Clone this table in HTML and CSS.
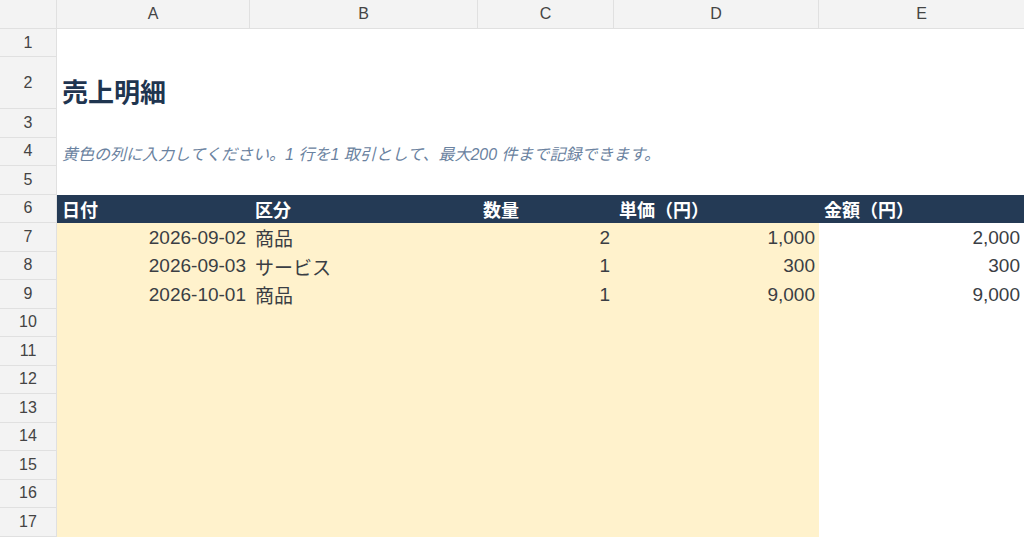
FILE: index.html
```html
<!DOCTYPE html>
<html lang="ja">
<head>
<meta charset="utf-8">
<title>売上明細</title>
<link rel="stylesheet" href="styles.css">
</head>
<body>
<div class="sheet">
  <div class="corner"></div>
  <div class="colhead">A</div>
  <div class="colhead">B</div>
  <div class="colhead">C</div>
  <div class="colhead">D</div>
  <div class="colhead last">E</div>

  <div class="rowhead r1">1</div>
  <div class="cell span r1"></div>

  <div class="rowhead r2">2</div>
  <div class="cell span title r2">売上明細</div>

  <div class="rowhead">3</div>
  <div class="cell span"></div>

  <div class="rowhead">4</div>
  <div class="cell span note">黄色の列に入力してください。1 行を1 取引として、最大200 件まで記録できます。</div>

  <div class="rowhead">5</div>
  <div class="cell span"></div>

  <div class="rowhead">6</div>
  <div class="cell hd">日付</div>
  <div class="cell hd">区分</div>
  <div class="cell hd">数量</div>
  <div class="cell hd">単価（円）</div>
  <div class="cell hd">金額（円）</div>

  <div class="rowhead">7</div>
  <div class="cell in num">2026-09-02</div>
  <div class="cell in">商品</div>
  <div class="cell in num">2</div>
  <div class="cell in num">1,000</div>
  <div class="cell num">2,000</div>

  <div class="rowhead">8</div>
  <div class="cell in num">2026-09-03</div>
  <div class="cell in">サービス</div>
  <div class="cell in num">1</div>
  <div class="cell in num">300</div>
  <div class="cell num">300</div>

  <div class="rowhead">9</div>
  <div class="cell in num">2026-10-01</div>
  <div class="cell in">商品</div>
  <div class="cell in num">1</div>
  <div class="cell in num">9,000</div>
  <div class="cell num">9,000</div>

  <div class="rowhead">10</div><div class="cell in span4"></div><div class="cell"></div>
  <div class="rowhead">11</div><div class="cell in span4"></div><div class="cell"></div>
  <div class="rowhead">12</div><div class="cell in span4"></div><div class="cell"></div>
  <div class="rowhead">13</div><div class="cell in span4"></div><div class="cell"></div>
  <div class="rowhead">14</div><div class="cell in span4"></div><div class="cell"></div>
  <div class="rowhead">15</div><div class="cell in span4"></div><div class="cell"></div>
  <div class="rowhead">16</div><div class="cell in span4"></div><div class="cell"></div>
  <div class="rowhead">17</div><div class="cell in span4"></div><div class="cell"></div>
</div>
</body>
</html>
```
FILE: styles.css
```css
html, body {
  margin: 0;
  padding: 0;
  background: #ffffff;
  overflow: hidden;
}

body {
  font-family: "Liberation Sans", Arial, "Noto Sans CJK JP", sans-serif;
  color: #3a3e44;
}

.sheet {
  display: grid;
  grid-template-columns: 57px 193px 228px 136px 205px 205px;
  grid-auto-rows: 28.5px;
  grid-template-rows: 29px 28px 52px;
  width: 1024px;
}

.corner,
.colhead {
  background: #f3f3f3;
  border-bottom: 1px solid #e0e0e0;
  border-right: 1px solid #e0e0e0;
  box-sizing: border-box;
}

.colhead {
  display: flex;
  align-items: center;
  justify-content: center;
  font-size: 16px;
  color: #444444;
}

.colhead.last {
  border-right: none;
}

.rowhead {
  background: #f3f3f3;
  border-bottom: 1px solid #e0e0e0;
  border-right: 1px solid #e0e0e0;
  box-sizing: border-box;
  display: flex;
  align-items: center;
  justify-content: center;
  font-size: 16px;
  color: #444444;
}

.cell {
  display: flex;
  align-items: center;
  padding: 1px 4px 0 5px;
  font-size: 19px;
  white-space: nowrap;
  min-width: 0;
  overflow: visible;
}

.span {
  grid-column: span 5;
}

.span4 {
  grid-column: span 4;
}

.title {
  align-items: flex-end;
  padding-bottom: 0;
  font-size: 26px;
  font-weight: bold;
  color: #1f3550;
}

.note {
  font-size: 16px;
  font-style: italic;
  color: #6a82a0;
  padding-top: 2px;
}

.hd {
  background: #243a55;
  color: #ffffff;
  font-weight: bold;
  font-size: 18px;
}

.in {
  background: #fff2cc;
}

.num {
  justify-content: flex-end;
}
```
